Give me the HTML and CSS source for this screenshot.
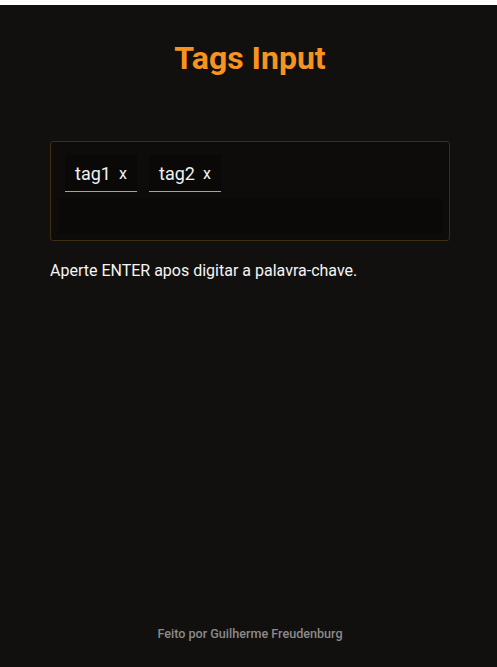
FILE: index.html
```html
<!DOCTYPE html>
<html lang="pt">
<head>
<meta charset="utf-8">
<title>Tags Input</title>
<link rel="stylesheet" href="styles.css">
</head>
<body>
<div class="page">
  <h1 class="title">Tags Input</h1>
  <div class="tags-box">
    <div class="tags">
      <span class="tag"><span class="tag-label">tag1</span><span class="tag-x">x</span></span>
      <span class="tag"><span class="tag-label">tag2</span><span class="tag-x">x</span></span>
    </div>
    <input class="tag-input" type="text">
  </div>
  <p class="hint">Aperte ENTER apos digitar a palavra-chave.</p>
  <footer class="footer">Feito por Guilherme Freudenburg</footer>
</div>
</body>
</html>
```

FILE: styles.css
```css
html {
  background: #ffffff;
}
body {
  margin: 5px 0 0;
  background: #12100e;
  min-height: 662px;
  font-family: Roboto, "Liberation Sans", sans-serif;
  color: #f2f2f2;
}
.page {
  width: 400px;
  margin-left: 50px;
  min-height: 662px;
  display: flex;
  flex-direction: column;
}
.title {
  margin: 34px 0 0;
  text-align: center;
  font-size: 32px;
  font-weight: 700;
  line-height: 38px;
  color: #f7931e;
}
.tags-box {
  margin-top: 64px;
  box-sizing: border-box;
  height: 100px;
  border: 1px solid #3f2d14;
  border-radius: 3px;
  background: #0e0c0a;
  padding: 7px 7px 6px;
  display: flex;
  flex-direction: column;
}
.tags {
  display: flex;
  gap: 12px;
  padding: 6px 0 0 7px;
}
.tag {
  box-sizing: border-box;
  width: 72px;
  height: 37px;
  padding: 0 10px;
  display: flex;
  align-items: center;
  gap: 8px;
  background: #0a0908;
  border-bottom: 1px solid #f7931e;
  color: #f0f0f0;
}
.tag-label {
  font-size: 18px;
}
.tag-x {
  font-size: 16px;
}
.tag-input {
  margin-top: 6px;
  height: 36px;
  box-sizing: border-box;
  border: none;
  outline: none;
  background: #0a0908;
  color: #f0f0f0;
  width: 100%;
}
.hint {
  margin: 20px 0 0;
  font-size: 16px;
  line-height: 20px;
  color: #f5f5f5;
}
.footer {
  margin-top: auto;
  margin-bottom: 25px;
  text-align: center;
  font-size: 12.6px;
  font-weight: 500;
  line-height: 16px;
  color: #8a8a8a;
}
```
